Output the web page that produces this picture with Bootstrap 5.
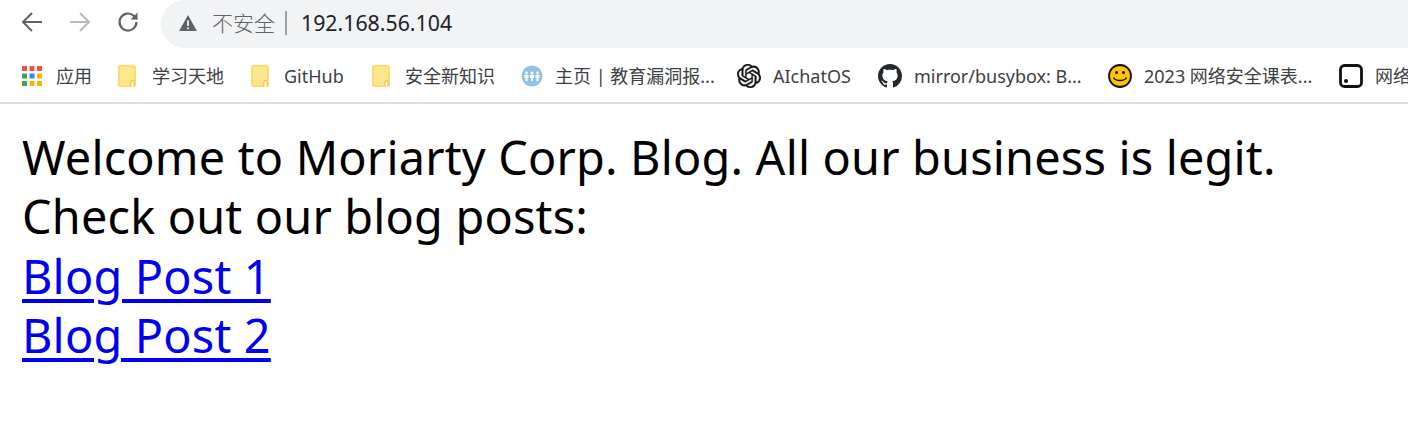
<!DOCTYPE html>
<html lang="zh">
<head>
<meta charset="utf-8">
<title>Moriarty Corp. Blog</title>
<link href="https://cdn.jsdelivr.net/npm/bootstrap@5.3.0/dist/css/bootstrap.min.css" rel="stylesheet">
<style>
html,body{height:100%;overflow:hidden;background:#fff}
body{font-family:"Noto Sans","Noto Sans CJK SC",sans-serif;color:#000}
.chrome-bar{height:104px;border-bottom:2px solid #dadce0;overflow:hidden}
.tool-row{height:48px;padding-left:20px}
.tool-btn{width:24px;height:24px;flex:none;margin-bottom:4px}
.tool-gap{margin-right:24px}
.addr{margin-left:21px;flex:1;height:48px;background:#f1f3f4;border-radius:24px 0 0 24px;padding:0 0 3px 18px;font-size:21.3px;white-space:nowrap}
.addr-warn{color:#5f6368;margin-left:15px;font-family:"Noto Sans CJK SC",sans-serif;font-weight:300;font-size:21px}
.addr-sep{width:2px;height:24px;background:#9aa0a6;margin:0 14px 0 10px}
.addr-url{color:#202124}
.mark-row{height:54px;padding:2px 0 0 22px;white-space:nowrap;font-size:18px;color:#3c4043}
.mark-item{display:flex;align-items:center;flex:none}
.mark-item svg{flex:none}
.mark-text{margin-left:12px}
.w1{width:96px}.w2{width:133px}.w3{width:121px}.w4{width:149px}.w5{width:216px}.w6{width:141px}.w7{width:230px}.w8{width:231px}.w9{width:100px}
.w1 .mark-text{margin-left:14px}
.w2 .mark-text{margin-left:16px}
.w3 .mark-text,.w4 .mark-text{margin-left:15px}
.blog{padding:24px 22px 0;font-size:46.8px;line-height:59.3px;letter-spacing:.2px}
.blog a{color:#00e;text-decoration-thickness:4px;text-underline-offset:5px}
</style>
</head>
<body>
<svg width="0" height="0" class="d-none"><defs><g id="fold"><rect x="1" y="1" width="16" height="20" rx="1.500" fill="#fee68f" stroke="#fbdc6c" stroke-width="2"/><path d="M13 22v-5a1.500 1.500 0 0 1 3 0v5" fill="#fff" stroke="#f5c842" stroke-width="1.300"/></g></defs></svg>
<div class="chrome-bar">
  <div class="tool-row d-flex align-items-center">
    <svg class="tool-btn tool-gap" viewBox="0 0 24 24" fill="none" stroke="#5f6368" stroke-width="2"><path d="M22 12H3M12 3l-9 9 9 9"/></svg>
    <svg class="tool-btn tool-gap" viewBox="0 0 24 24" fill="none" stroke="#b8babd" stroke-width="2"><path d="M2 12h19M12 3l9 9-9 9"/></svg>
    <svg class="tool-btn" viewBox="0 0 24 24" fill="none" stroke="#5f6368" stroke-width="2.2"><path d="M20.500 12a8.500 8.500 0 1 1-2.500-6L21 9"/><path d="M21.500 2.500V9.500h-7" fill="#5f6368" stroke="none"/></svg>
    <div class="addr d-flex align-items-center">
      <svg width="18" height="16" viewBox="0 0 20 18"><path d="M10 0L20 18H0z" fill="#5f6368"/><path d="M9 6h2v6.500H9zM9 14h2v2H9z" fill="#f1f3f4"/></svg>
      <span class="addr-warn">不安全</span><span class="addr-sep"></span><span class="addr-url">192.168.56.104</span>
    </div>
  </div>
  <div class="mark-row d-flex align-items-center">
    <div class="mark-item w1"><svg width="20" height="20" viewBox="0 0 20 20"><rect x="0" y="0" width="5" height="5" fill="#f1504a"/><rect x="7.500" y="0" width="5" height="5" fill="#f1504a"/><rect x="15" y="0" width="5" height="5" fill="#f1504a"/><rect x="0" y="7.500" width="5" height="5" fill="#34a853"/><rect x="7.500" y="7.500" width="5" height="5" fill="#2a8ff0"/><rect x="15" y="7.500" width="5" height="5" fill="#fbb004"/><rect x="0" y="15" width="5" height="5" fill="#34a853"/><rect x="7.500" y="15" width="5" height="5" fill="#fbb004"/><rect x="15" y="15" width="5" height="5" fill="#fbb004"/></svg><span class="mark-text">应用</span></div>
    <div class="mark-item w2"><svg width="18" height="22" viewBox="0 0 18 22"><use href="#fold"/></svg><span class="mark-text">学习天地</span></div>
    <div class="mark-item w3"><svg width="18" height="22" viewBox="0 0 18 22"><use href="#fold"/></svg><span class="mark-text">GitHub</span></div>
    <div class="mark-item w4"><svg width="18" height="22" viewBox="0 0 18 22"><use href="#fold"/></svg><span class="mark-text">安全新知识</span></div>
    <div class="mark-item w5"><svg width="22" height="22" viewBox="0 0 22 22"><circle cx="11" cy="11" r="10.500" fill="#94c2e4"/><g fill="#fff"><circle cx="5.500" cy="8" r="1.400"/><circle cx="11" cy="8" r="1.400"/><circle cx="16.500" cy="8" r="1.400"/><path d="M3.500 10h4v3h-1v3h-2v-3h-1zM9 10h4v3h-1v3h-2v-3H9zM14.500 10h4v3h-1v3h-2v-3h-1z"/></g></svg><span class="mark-text">主页 | 教育漏洞报...</span></div>
    <div class="mark-item w6"><svg width="24" height="24" viewBox="0 0 24 24"><path fill="#111" stroke="#111" stroke-width=".4" d="M22.2819 9.8211a5.9847 5.9847 0 0 0-.5157-4.9108 6.0462 6.0462 0 0 0-6.5098-2.9A6.0651 6.0651 0 0 0 4.9807 4.1818a5.9847 5.9847 0 0 0-3.9977 2.9 6.0462 6.0462 0 0 0 .7427 7.0966 5.98 5.98 0 0 0 .511 4.9107 6.051 6.051 0 0 0 6.5146 2.9001A5.9847 5.9847 0 0 0 13.2599 24a6.0557 6.0557 0 0 0 5.7718-4.2058 5.9894 5.9894 0 0 0 3.9977-2.9001 6.0557 6.0557 0 0 0-.7475-7.0729zm-9.022 12.6081a4.4755 4.4755 0 0 1-2.8764-1.0408l.1419-.0804 4.7783-2.7582a.7948.7948 0 0 0 .3927-.6813v-6.7369l2.02 1.1686a.071.071 0 0 1 .038.052v5.5826a4.504 4.504 0 0 1-4.4945 4.4944zm-9.6607-4.1254a4.4708 4.4708 0 0 1-.5346-3.0137l.142.0852 4.783 2.7582a.7712.7712 0 0 0 .7806 0l5.8428-3.3685v2.3324a.0804.0804 0 0 1-.0332.0615L9.74 19.9502a4.4992 4.4992 0 0 1-6.1408-1.6464zM2.3408 7.8956a4.485 4.485 0 0 1 2.3655-1.9728V11.6a.7664.7664 0 0 0 .3879.6765l5.8144 3.3543-2.0201 1.1685a.0757.0757 0 0 1-.071 0l-4.8303-2.7865A4.504 4.504 0 0 1 2.3408 7.872zm16.5963 3.8558L13.1038 8.364 15.1192 7.2a.0757.0757 0 0 1 .071 0l4.8303 2.7913a4.4944 4.4944 0 0 1-.6765 8.1042v-5.6772a.79.79 0 0 0-.407-.667zm2.0107-3.0231l-.142-.0852-4.7735-2.7818a.7759.7759 0 0 0-.7854 0L9.409 9.2297V6.8974a.0662.0662 0 0 1 .0284-.0615l4.8303-2.7866a4.4992 4.4992 0 0 1 6.6802 4.66zM8.3065 12.863l-2.02-1.1638a.0804.0804 0 0 1-.038-.0567V6.0742a4.4992 4.4992 0 0 1 7.3757-3.4537l-.142.0805L8.704 5.459a.7948.7948 0 0 0-.3927.6813zm1.0976-2.3654l2.602-1.4998 2.6069 1.4998v2.9994l-2.5974 1.4997-2.6067-1.4997Z"/></svg><span class="mark-text">AIchatOS</span></div>
    <div class="mark-item w7"><svg width="24" height="24" viewBox="0 0 16 16"><path fill="#24292f" d="M8 0C3.580 0 0 3.580 0 8c0 3.540 2.290 6.530 5.470 7.590.4.070.55-.17.55-.38 0-.19-.010-.82-.010-1.490-2.010.37-2.530-.49-2.690-.94-.09-.23-.48-.94-.82-1.130-.28-.15-.68-.52-.010-.53.630-.010 1.080.58 1.230.82.720 1.210 1.870.87 2.330.66.070-.52.280-.87.510-1.070-1.780-.2-3.640-.89-3.640-3.950 0-.87.310-1.590.82-2.150-.08-.2-.36-1.020.08-2.120 0 0 .67-.21 2.200.82.640-.18 1.320-.27 2-.27s1.360.09 2 .27c1.530-1.040 2.200-.82 2.200-.82.440 1.100.16 1.920.08 2.120.510.560.82 1.270.82 2.150 0 3.070-1.870 3.750-3.650 3.950.29.250.54.730.54 1.480 0 1.070-.010 1.930-.010 2.200 0 .21.150.46.550.38A8.010 8.010 0 0 0 16 8c0-4.420-3.580-8-8-8z"/></svg><span class="mark-text">mirror/busybox: B...</span></div>
    <div class="mark-item w8"><svg width="24" height="24" viewBox="0 0 24 24"><circle cx="12" cy="12" r="11" fill="#fdc200" stroke="#111" stroke-width="1.800"/><circle cx="8.500" cy="8.500" r="1.500" fill="#111"/><circle cx="15.500" cy="8.500" r="1.500" fill="#111"/><path d="M5.500 13.500c2 4 11 4 13 0" fill="none" stroke="#111" stroke-width="1.500"/></svg><span class="mark-text">2023 网络安全课表...</span></div>
    <div class="mark-item w9"><svg width="24" height="24" viewBox="0 0 24 24"><rect x="1.500" y="1.500" width="21" height="21" rx="4" fill="#fff" stroke="#111" stroke-width="2.800"/><circle cx="7" cy="17" r="2" fill="#111"/></svg><span class="mark-text">网络</span></div>
  </div>
</div>
<main class="blog">
  Welcome to Moriarty Corp. Blog. All our business is legit.<br>
  Check out our blog posts:<br>
  <a href="#">Blog Post 1</a><br>
  <a href="#">Blog Post 2</a>
</main>
</body>
</html>
